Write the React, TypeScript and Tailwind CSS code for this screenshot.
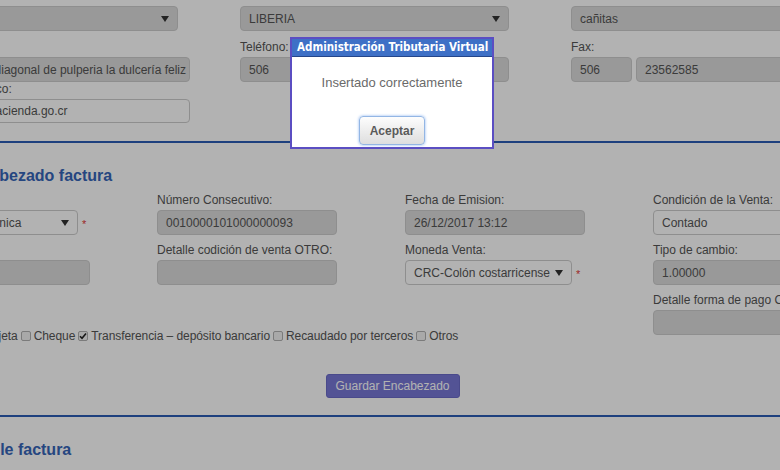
import type { ReactNode } from 'react';

function Label({ children }: { children: ReactNode }) {
  return <div className="h-[14px] leading-[14px] mb-[3px] whitespace-nowrap">{children}</div>;
}

function Field({ value = '', disabled = true, className = 'w-full', h = 'h-[25px]', end = false }: { value?: string; disabled?: boolean; className?: string; h?: string; end?: boolean }) {
  return (
    <div
      className={`${h} ${className} shrink-0 rounded-[4px] border border-[#ccc] flex items-center whitespace-nowrap overflow-hidden text-[#555] ${
        end ? 'justify-end pr-[3px]' : 'px-[8px]'
      } ${disabled ? 'bg-[#dbdbdb]' : 'bg-white'}`}
    >
      <span className="shrink-0">{value}</span>
    </div>
  );
}

function Arrow() {
  return (
    <svg width="8" height="6" viewBox="0 0 8 6" className="shrink-0">
      <path d="M0 0h8L4 6z" fill="#333" />
    </svg>
  );
}

function Select({ value, disabled = false, className = 'w-full', required = false }: { value: string; disabled?: boolean; className?: string; required?: boolean }) {
  return (
    <div className="flex items-center">
      <div
        className={`h-[25px] ${className} shrink-0 rounded-[4px] border border-[#ccc] pl-[8px] pr-[8px] flex items-center justify-between text-[#555] whitespace-nowrap overflow-hidden ${
          disabled ? 'bg-[#dbdbdb]' : 'bg-white'
        }`}
      >
        <span>{value}</span>
        <Arrow />
      </div>
      {required && <span className="ml-[4px] mt-[3px] text-[#e03a3a] text-[11px] leading-none">*</span>}
    </div>
  );
}

function Check({ checked = false }: { checked?: boolean }) {
  return (
    <span className="mx-[3px] inline-flex items-center justify-center w-[10px] h-[10px] rounded-[2px] border border-[#b0b0b0] bg-[#f2f2f2]">
      {checked && (
        <svg width="8" height="8" viewBox="0 0 8 8">
          <path d="M1 4.2l2 2L7 1.5" stroke="#222" strokeWidth="1.6" fill="none" />
        </svg>
      )}
    </span>
  );
}

function Heading({ children }: { children: ReactNode }) {
  return (
    <h2 className="pl-[52px] h-[18px] leading-[18px] text-[16px] font-bold text-[#3565b8] whitespace-nowrap">{children}</h2>
  );
}

export default function App() {
  return (
    <div className="relative w-[780px] h-[470px] overflow-hidden bg-white font-['Liberation_Sans',Arial,sans-serif] text-[12px] text-[#555]">
      <div className="ml-[-91px] w-[1100px] mt-[-11px]">
        {/* Dirección */}
        <div className="flex gap-x-[62px]">
          <div className="w-[269px] flex flex-col">
            <Label>Cantón:</Label>
            <Select value="LIBERIA" disabled />
            <div className="mt-[9px]">
              <Label>Otras Señas:</Label>
            </div>
            <Field value="100 metros oeste diagonal de pulperia la dulcería feliz" className="w-[281px]" end />
            <div className="h-[14px] leading-[14px] mb-[3px] whitespace-nowrap">Correo Electrónico:</div>
            <Field value="facturacion@hacienda.go.cr" disabled={false} className="w-[281px]" h="h-[24px]" />
          </div>
          <div className="w-[269px] flex flex-col">
            <Label>Distrito:</Label>
            <Select value="LIBERIA" disabled />
            <div className="mt-[9px]">
              <Label>Teléfono:</Label>
            </div>
            <div className="flex gap-[4px]">
              <Field value="506" className="w-[61px]" />
              <Field value="26661234" className="w-[204px]" />
            </div>
          </div>
          <div className="w-[269px] flex flex-col">
            <Label>Barrio:</Label>
            <Field value="cañitas" />
            <div className="mt-[9px]">
              <Label>Fax:</Label>
            </div>
            <div className="flex gap-[4px]">
              <Field value="506" className="w-[61px]" />
              <Field value="23562585" className="w-[204px]" />
            </div>
          </div>
        </div>

        <div className="mt-[18px] h-[2px] w-full bg-[#2b5cb5]" />

        {/* Encabezado */}
        <div className="mt-[24px]">
          <Heading>Encabezado factura</Heading>
        </div>
        <div className="mt-[8px] grid grid-cols-[180px_180px_180px_180px] gap-x-[68px]">
          <div className="mb-[8px]">
            <Label>Tipo de Factura:</Label>
            <Select value="Factura Electrónica" className="w-[169px]" required />
          </div>
          <div className="mb-[8px]">
            <Label>Número Consecutivo:</Label>
            <Field value="0010000101000000093" />
          </div>
          <div className="mb-[8px]">
            <Label>Fecha de Emision:</Label>
            <Field value="26/12/2017 13:12" />
          </div>
          <div className="mb-[8px]">
            <Label>Condición de la Venta:</Label>
            <Select value="Contado" className="w-[180px]" />
          </div>

          <div className="mb-[8px]">
            <Label>Plazo Crédito:</Label>
            <Field className="w-[181px]" />
          </div>
          <div className="mb-[8px]">
            <Label>Detalle codición de venta OTRO:</Label>
            <Field />
          </div>
          <div className="mb-[8px]">
            <Label>Moneda Venta:</Label>
            <Select value="CRC-Colón costarricense" className="w-[167px]" required />
          </div>
          <div className="mb-[8px]">
            <Label>Tipo de cambio:</Label>
            <Field value="1.00000" />
          </div>

          <div className="col-span-3">
            <Label>Medio de Pago:</Label>
            <div className="mt-[21px] h-[16px] flex items-center whitespace-nowrap ml-[-1px] tracking-[-0.07px]">
              <Check />
              <span>Efectivo</span>
              <Check />
              <span>Tarjeta</span>
              <Check />
              <span>Cheque</span>
              <Check checked />
              <span>Transferencia – depósito bancario</span>
              <Check />
              <span>Recaudado por terceros</span>
              <Check />
              <span>Otros</span>
            </div>
          </div>
          <div>
            <Label>Detalle forma de pago OTRO:</Label>
            <Field />
          </div>
        </div>

        <div className="w-[967px] flex justify-center mt-[30px]">
          <button className="h-[24px] w-[134px] rounded-[3px] border border-[#6a6ac8] bg-[#7878d6] text-white text-[12px]">
            Guardar Encabezado
          </button>
        </div>

        <div className="mt-[17px] h-[2px] w-full bg-[#2b5cb5]" />

        <div className="mt-[24px]">
          <Heading>Detalle factura</Heading>
        </div>
      </div>

      {/* fondo del modal */}
      <div className="absolute inset-0 bg-black/30" />

      <div className="absolute left-[290px] top-[37px] w-[204px] h-[112px] border-2 border-[#5b4ec2] bg-white flex flex-col">
        <div className="h-[18px] shrink-0 bg-[#3e70c6] border-b border-[#25468a] pl-[5px] overflow-hidden whitespace-nowrap text-white font-bold text-[11.5px] leading-[17px] font-['DejaVu_Sans_Condensed','DejaVu_Sans',sans-serif]">
          Administración Tributaria Virtual
        </div>
        <div className="flex-1 flex flex-col items-center">
          <p className="mt-[18px] text-[13px] leading-[15px] text-[#6a6a6a]">Insertado correctamente</p>
          <button className="mt-[26px] h-[29px] w-[66px] rounded-[4px] border border-[#93b6e4] shadow-[0_0_3px_#8ab4f0] bg-gradient-to-b from-[#fdfdfd] to-[#dedede] text-[12px] font-bold text-[#5a5a5a]">
            Aceptar
          </button>
        </div>
      </div>
    </div>
  );
}
